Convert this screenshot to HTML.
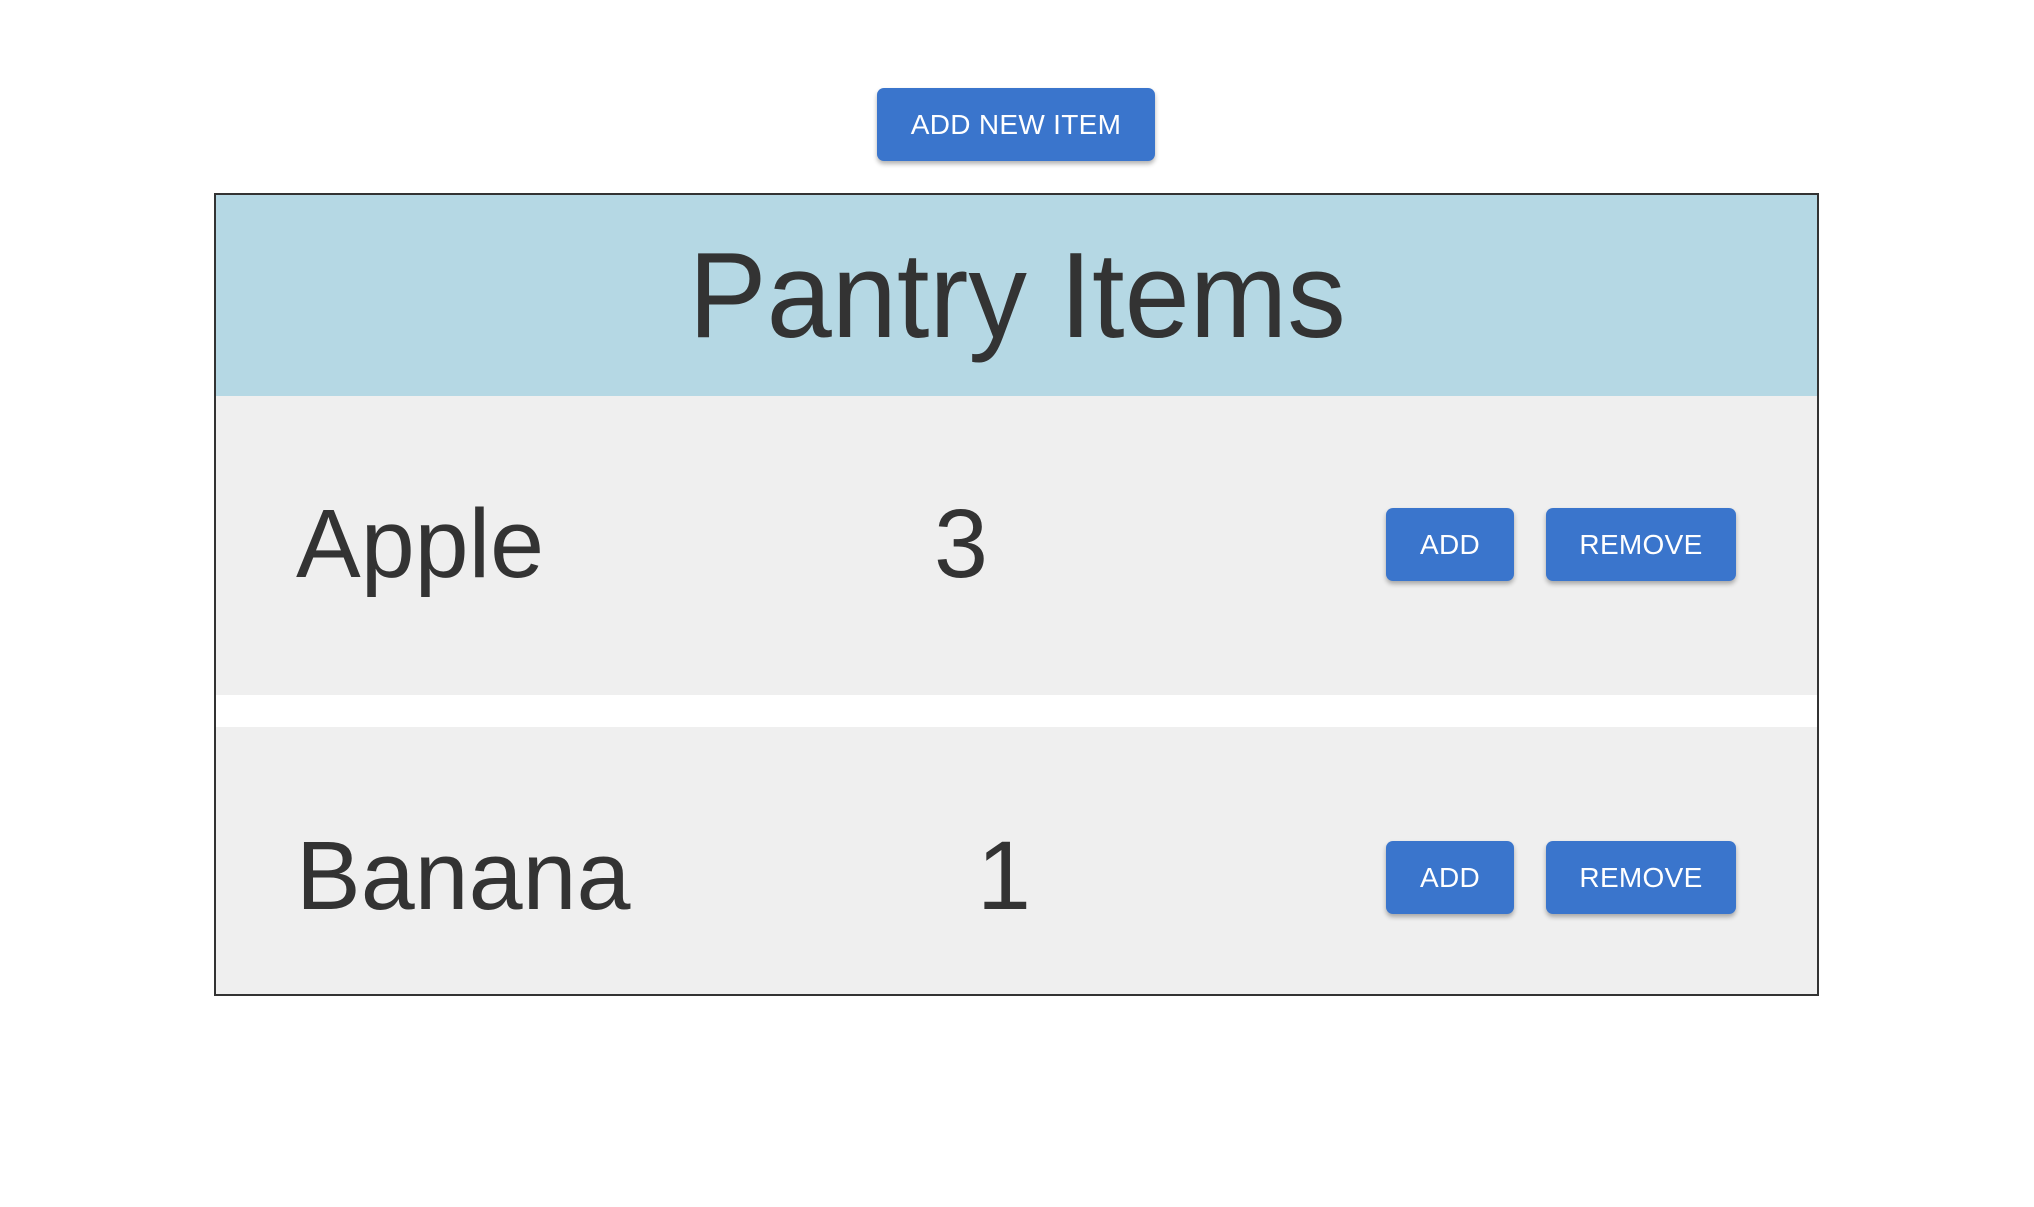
<!DOCTYPE html>
<html><head><meta charset="utf-8"><style>
body{margin:0;width:2034px;height:1207px;background:#fff;position:relative;overflow:hidden;font-family:"Liberation Sans",sans-serif;color:#333}
.btn{position:absolute;background:#3a75cc;color:#fff;border-radius:7px;display:flex;align-items:center;justify-content:center;font-size:28px;box-shadow:0 3px 5px rgba(0,0,0,.3);letter-spacing:0.3px}
.box{position:absolute;left:214px;top:193px;width:1601px;height:799px;border:2px solid #333;background:#fff}
.hdr{position:absolute;left:0;top:0;width:100%;height:201px;background:#b5d8e4}
.row{position:absolute;left:0;width:100%;background:#efefef}
.t{position:absolute;line-height:1;white-space:nowrap}
</style></head><body>
<div class="btn" style="left:877px;top:88px;width:278px;height:73px">ADD NEW ITEM</div>
<div class="box">
<div class="hdr"></div>
<div class="row" style="top:201px;height:299px"></div>
<div class="row" style="top:532px;height:267px"></div>
</div>
<div class="t" style="left:0;width:2034px;text-align:center;top:234px;font-size:122px;transform:scaleX(0.96);transform-origin:1021px 0">Pantry Items</div>
<div class="t" style="left:296px;top:495px;font-size:97px">Apple</div>
<div class="t" style="left:934px;top:495px;font-size:97px">3</div>
<div class="t" style="left:296px;top:827px;font-size:97px">Banana</div>
<div class="t" style="left:977px;top:827px;font-size:97px">1</div>
<div class="btn" style="left:1386px;top:508px;width:128px;height:73px">ADD</div>
<div class="btn" style="left:1546px;top:508px;width:190px;height:73px">REMOVE</div>
<div class="btn" style="left:1386px;top:841px;width:128px;height:73px">ADD</div>
<div class="btn" style="left:1546px;top:841px;width:190px;height:73px">REMOVE</div>
</body></html>
